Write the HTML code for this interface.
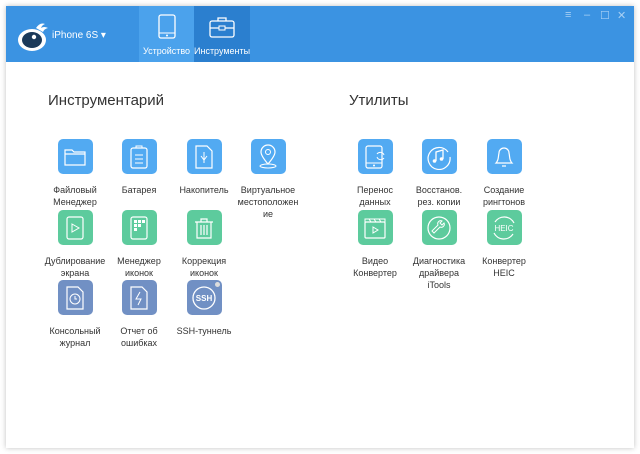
<html><head><style>
body{margin:0;width:640px;height:454px;background:#fff;font-family:"Liberation Sans",sans-serif;position:relative;overflow:hidden}
.win{position:absolute;left:6px;top:6px;width:628px;height:442px;background:#fff;box-shadow:0 0 5px rgba(0,0,0,.25)}
.hdr{position:absolute;left:0;top:0;width:628px;height:56px;background:#3b93e2}
.tab{position:absolute;top:0;height:56px;color:#fff;font-size:9px;text-align:center}
.sec{position:absolute;font-size:15px;color:#333}
.it{position:absolute;width:70px;text-align:center;font-size:9px;color:#333;line-height:12px}
.ic{width:35px;height:35px;border-radius:5px;margin:0 auto 10px;display:flex;align-items:center;justify-content:center}
.b{background:#52aaf2}.g{background:#5dcb9d}.s{background:#7190c4}
.wc{position:absolute;top:3px;color:#a8d0f4;font-size:11px}
</style></head><body><div class="win">
<div class="hdr">
<svg style="position:absolute;left:10px;top:16px" width="34" height="30" viewBox="0 0 34 30"><path d="M20 6 Q24 0 29 2 Q26 3 25 6 Q28 4 32 6 Q28 7 27 10" fill="#fff"/><ellipse cx="16" cy="18" rx="14" ry="11" fill="#fff"/><ellipse cx="16" cy="18" rx="10" ry="8" fill="#1b3a5a"/><circle cx="18" cy="15" r="2.2" fill="#fff"/></svg>
<div style="position:absolute;left:46px;top:24px;color:#fff;font-size:10px">iPhone 6S ▾</div>
<div class="tab" style="left:133px;width:55px;background:#4ba2ec"><svg style="margin-top:8px" width="20" height="26"><rect x="2" y="1" width="16" height="23" rx="2" fill="none" stroke="#fff" stroke-width="1.3"/><line x1="2" y1="19" x2="18" y2="19" stroke="#fff"/><circle cx="10" cy="21.5" r="1" fill="#fff"/></svg><div style="margin-top:6px">Устройство</div></div>
<div class="tab" style="left:188px;width:56px;background:#2b7fcf"><svg style="margin-top:10px" width="26" height="22"><rect x="1" y="5" width="24" height="16" rx="2" fill="none" stroke="#fff" stroke-width="1.3"/><path d="M9 5V2h8v3M1 12h24" fill="none" stroke="#fff" stroke-width="1.3"/><rect x="10" y="10" width="6" height="4" fill="#2b7fcf" stroke="#fff"/></svg><div style="margin-top:8px">Инструменты</div></div>
<span class="wc" style="left:559px">≡</span><span class="wc" style="left:578px">–</span><span class="wc" style="left:594px">☐</span><span class="wc" style="left:611px">✕</span>
</div>
<div class="sec" style="left:42px;top:86px">Инструментарий</div>
<div class="sec" style="left:343px;top:86px">Утилиты</div>

<div class="it" style="left:34px;top:133px"><div class="ic b"><svg width="22" height="18"><path d="M1 2h7l2 2h11v13H1z M1 6h20" fill="none" stroke="#fff" stroke-width="1.2"/></svg></div>Файловый<br>Менеджер</div>
<div class="it" style="left:98px;top:133px"><div class="ic b"><svg width="18" height="24"><rect x="1" y="3" width="16" height="20" rx="2" fill="none" stroke="#fff" stroke-width="1.2"/><path d="M6 3V1h6v2M5 10h8M5 14h8M5 18h8" stroke="#fff" fill="none"/></svg></div>Батарея</div>
<div class="it" style="left:163px;top:133px"><div class="ic b"><svg width="18" height="24"><path d="M1 1h11l5 5v17H1z" fill="none" stroke="#fff" stroke-width="1.2"/><path d="M9 7v11M6 11l3 4 3-4" stroke="#fff" fill="none"/></svg></div>Накопитель</div>
<div class="it" style="left:227px;top:133px"><div class="ic b"><svg width="22" height="26"><path d="M11 20C5 13 4 10 4 8a7 7 0 0 1 14 0c0 2-1 5-7 12z" fill="none" stroke="#fff" stroke-width="1.2"/><circle cx="11" cy="8" r="2.5" fill="none" stroke="#fff"/><ellipse cx="11" cy="22" rx="8" ry="2" fill="none" stroke="#fff"/></svg></div>Виртуальное<br>местоположен<br>ие</div>

<div class="it" style="left:34px;top:204px"><div class="ic g"><svg width="18" height="24"><rect x="1" y="1" width="16" height="22" rx="2" fill="none" stroke="#fff" stroke-width="1.2"/><path d="M6 8l7 4-7 4z" fill="none" stroke="#fff"/></svg></div>Дублирование<br>экрана</div>
<div class="it" style="left:98px;top:204px"><div class="ic g"><svg width="18" height="24"><rect x="1" y="1" width="16" height="22" rx="2" fill="none" stroke="#fff" stroke-width="1.2"/><path d="M4 4h3v3H4zM8 4h3v3H8zM12 4h3v3h-3zM4 8h3v3H4zM8 8h3v3H8zM4 12h3v3H4z" fill="#fff"/></svg></div>Менеджер<br>иконок</div>
<div class="it" style="left:163px;top:204px"><div class="ic g"><svg width="22" height="22"><path d="M2 5h18M8 5V2h6v3M4 5v16h14V5M8 8v10M11 8v10M14 8v10" fill="none" stroke="#fff" stroke-width="1.2"/></svg></div>Коррекция<br>иконок</div>

<div class="it" style="left:34px;top:274px"><div class="ic s"><svg width="18" height="24"><path d="M1 1h11l5 5v17H1z" fill="none" stroke="#fff" stroke-width="1.2"/><circle cx="9" cy="13" r="5" fill="none" stroke="#fff"/><path d="M9 10v3h2" stroke="#fff" fill="none"/></svg></div>Консольный<br>журнал</div>
<div class="it" style="left:98px;top:274px"><div class="ic s"><svg width="18" height="24"><path d="M1 1h11l5 5v17H1z" fill="none" stroke="#fff" stroke-width="1.2"/><path d="M10 6l-4 7h5l-3 6" stroke="#fff" fill="none"/></svg></div>Отчет об<br>ошибках</div>
<div class="it" style="left:163px;top:274px"><div class="ic s" style="position:relative"><svg width="26" height="26"><circle cx="13" cy="13" r="11" fill="none" stroke="#fff" stroke-width="1.3"/><text x="13" y="16" font-size="8" font-weight="bold" fill="#fff" text-anchor="middle" font-family="Liberation Sans">SSH</text></svg><span style="position:absolute;right:2px;top:2px;width:5px;height:5px;border-radius:50%;background:#ddd"></span></div>SSH-туннель</div>

<div class="it" style="left:334px;top:133px"><div class="ic b"><svg width="22" height="24"><rect x="2" y="1" width="16" height="22" rx="2" fill="none" stroke="#fff" stroke-width="1.2"/><path d="M2 18h16" stroke="#fff"/><circle cx="10" cy="20.5" r="1" fill="#fff"/><path d="M13 9a4 4 0 0 1 7 1M20 13a4 4 0 0 1-7-1" fill="none" stroke="#fff"/></svg></div>Перенос<br>данных</div>
<div class="it" style="left:398px;top:133px"><div class="ic b"><svg width="26" height="26"><path d="M22 8A11 11 0 1 0 24 13" fill="none" stroke="#fff" stroke-width="1.2"/><path d="M10 17V8l7-2v9" fill="none" stroke="#fff" stroke-width="1.3"/><circle cx="8.5" cy="17" r="1.8" fill="#fff"/><circle cx="15.5" cy="15" r="1.8" fill="#fff"/></svg></div>Восстанов.<br>рез. копии</div>
<div class="it" style="left:463px;top:133px"><div class="ic b"><svg width="24" height="24"><path d="M4 18c3-3 2-6 3-10a5 5 0 0 1 10 0c1 4 0 7 3 10z M10 21h4" fill="none" stroke="#fff" stroke-width="1.2"/></svg></div>Создание<br>рингтонов</div>

<div class="it" style="left:334px;top:204px"><div class="ic g"><svg width="22" height="22"><rect x="1" y="5" width="20" height="16" rx="1" fill="none" stroke="#fff" stroke-width="1.2"/><path d="M1 2h20v3H1zM5 2l2 3M10 2l2 3M15 2l2 3M9 10l5 3-5 3z" fill="none" stroke="#fff"/></svg></div>Видео<br>Конвертер</div>
<div class="it" style="left:398px;top:204px"><div class="ic g"><svg width="26" height="26"><circle cx="13" cy="13" r="11" fill="none" stroke="#fff" stroke-width="1.2"/><path d="M8 18l6-6a3 3 0 0 0 4-4l-2 2-2-2 2-2a3 3 0 0 0-4 4l-6 6z" fill="none" stroke="#fff"/></svg></div>Диагностика<br>драйвера<br>iTools</div>
<div class="it" style="left:463px;top:204px"><div class="ic g"><svg width="28" height="28"><path d="M5 8A11 11 0 0 1 24 9M23 20A11 11 0 0 1 4 19" fill="none" stroke="#fff" stroke-width="1.2"/><text x="14" y="17" font-size="8" fill="#fff" text-anchor="middle" font-family="Liberation Sans">HEIC</text></svg></div>Конвертер<br>HEIC</div>
</div></body></html>
